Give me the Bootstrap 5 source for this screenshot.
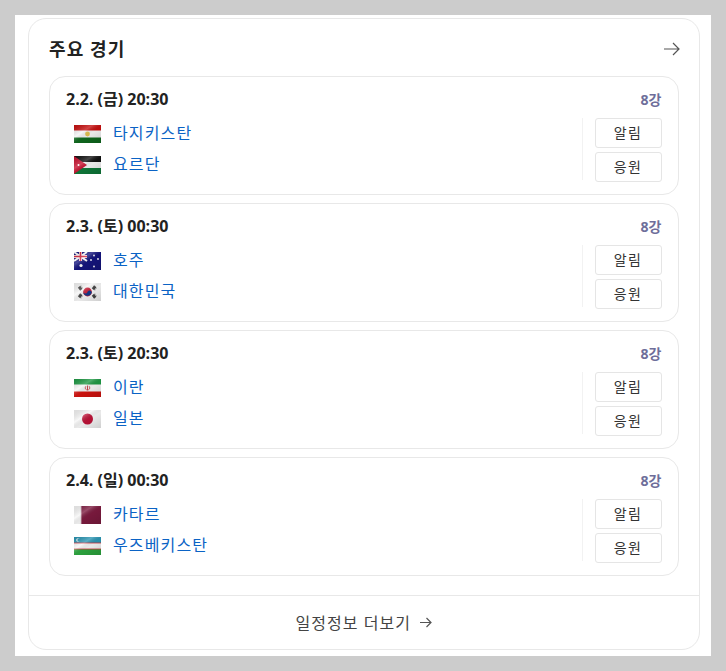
<!DOCTYPE html>
<html lang="ko">
<head>
<meta charset="utf-8">
<title>주요 경기</title>
<link href="https://cdn.jsdelivr.net/npm/bootstrap@5.3.0/dist/css/bootstrap.min.css" rel="stylesheet">
<style>
html,body{height:100%}
body{background:#ccc;font-family:"Open Sans","Noto Sans CJK KR","Noto Sans",sans-serif;color:#222;overflow:hidden}
.sheet{margin:15px 15px 0 15px;width:696px;height:641px;background:#fff;padding:3px 11.5px 6px 13px}
.panel{height:632px;border:1px solid #e8e8e8;border-radius:18px;background:#fff}
.panel-head{height:57px;padding:2px 19px 0 20px}
.panel-title{font-size:18px;font-weight:700;color:#222;letter-spacing:1.1px;line-height:26px;margin:0}
.match-list{padding:0 20px;gap:8px}
.match{height:119px;border:1px solid #e8e8e8;border-radius:16px;padding:11px 16px 12px 16px}
.match-top{height:22px}
.match-time{font-size:16px;font-weight:700;line-height:22px;color:#222;letter-spacing:0}
.match-round{font-size:14px;font-weight:700;color:#6e6e9a;line-height:22px;padding-top:1px}
.teams{padding-left:8px;margin-top:9px;width:516px}
.team{height:31px;gap:12px}
.team a{font-size:16px;color:#0b63c5;text-decoration:none;letter-spacing:1.15px;line-height:20px;margin-top:-3px}
.flag{display:block;width:27px;height:18px;flex:none;margin-top:-1px}
.actions{position:relative;padding-left:13px;gap:4px;margin-top:8px}
.actions::before{content:"";position:absolute;left:0;top:0;height:62px;width:1px;background:#f2f2f2}
.act{width:67px;height:30px;padding:0;border:1px solid #e5e5e5;border-radius:3px;background:#fff;font-size:14px;color:#333;line-height:26px;letter-spacing:1.4px;--bs-btn-hover-bg:#fff}
.panel-foot{margin-top:19px;border-top:1px solid #e8e8e8;height:54px;font-size:16px;color:#444;gap:9px;letter-spacing:1.05px}
.panel-foot a{color:#444;text-decoration:none}
</style>
</head>
<body>
<svg width="0" height="0" class="position-absolute">
<defs>
<linearGradient id="gl" x1="0" y1="0" x2="1" y2="1">
<stop offset="0" stop-color="#000" stop-opacity=".1"/>
<stop offset=".35" stop-color="#fff" stop-opacity=".22"/>
<stop offset=".55" stop-color="#000" stop-opacity=".05"/>
<stop offset="1" stop-color="#000" stop-opacity=".16"/>
</linearGradient>
</defs>
</svg>
<div class="sheet">
<section class="panel d-flex flex-column">
<div class="panel-head d-flex align-items-center justify-content-between">
<h2 class="panel-title">주요 경기</h2>
<svg width="16" height="14" viewBox="0 0 16 14" fill="none" stroke="#555" stroke-width="1.2"><path d="M0 7H15M9 1l6 6-6 6"/></svg>
</div>
<div class="match-list d-flex flex-column">

<article class="match">
<div class="match-top d-flex justify-content-between"><span class="match-time">2.2. (금) 20:30</span><span class="match-round">8강</span></div>
<div class="d-flex justify-content-between">
<div class="teams">
<div class="team d-flex align-items-center"><svg class="flag" viewBox="0 0 27 18"><rect width="27" height="18" fill="#f4f4f4"/><rect width="27" height="5.500" fill="#c70f0f"/><rect y="12.500" width="27" height="5.500" fill="#0f6a1e"/><circle cx="13.500" cy="9" r="2.400" fill="#e3c24e"/><rect width="27" height="18" fill="url(#gl)"/></svg><a href="#">타지키스탄</a></div>
<div class="team d-flex align-items-center"><svg class="flag" viewBox="0 0 27 18"><rect width="27" height="18" fill="#f4f4f4"/><rect width="27" height="6" fill="#111"/><rect y="12" width="27" height="6" fill="#0f7a3a"/><path d="M0 0L13 9 0 18Z" fill="#c8102e"/><circle cx="4.500" cy="9" r="1" fill="#fff"/><rect width="27" height="18" fill="url(#gl)"/></svg><a href="#">요르단</a></div>
</div>
<div class="actions d-flex flex-column"><button class="btn act" type="button">알림</button><button class="btn act" type="button">응원</button></div>
</div>
</article>

<article class="match">
<div class="match-top d-flex justify-content-between"><span class="match-time">2.3. (토) 00:30</span><span class="match-round">8강</span></div>
<div class="d-flex justify-content-between">
<div class="teams">
<div class="team d-flex align-items-center"><svg class="flag" viewBox="0 0 27 18"><rect width="27" height="18" fill="#14147e"/><path d="M0 0L13 9M13 0L0 9" stroke="#fff" stroke-width="2"/><path d="M6.500 0V9M0 4.500H13" stroke="#fff" stroke-width="3"/><path d="M6.500 0V9M0 4.500H13" stroke="#d3203a" stroke-width="1.600"/><g fill="#fff"><circle cx="7" cy="13.500" r="1.600"/><circle cx="20" cy="3.500" r=".9"/><circle cx="24" cy="7" r=".9"/><circle cx="17" cy="8" r=".9"/><circle cx="20" cy="14.500" r=".9"/></g><rect width="27" height="18" fill="url(#gl)"/></svg><a href="#">호주</a></div>
<div class="team d-flex align-items-center"><svg class="flag" viewBox="0 0 27 18"><rect width="27" height="18" fill="#f6f6f6"/><circle cx="13.500" cy="9" r="4.400" fill="#c8203a"/><path d="M9.200 8.400a4.400 4.400 0 0 0 8.600 1.200a2.200 2.200 0 0 0-4.300-.6a2.200 2.200 0 0 1-4.300-.6Z" fill="#123a8c"/><g stroke="#444" stroke-width="1.900" stroke-dasharray="3 .7"><path d="M4.500 5.500L7.500 3M5.600 7L8.600 4.500"/><path d="M19.500 3L22.500 5.500M18.400 4.500L21.400 7"/><path d="M4.500 12.500L7.500 15M5.600 11L8.600 13.500"/><path d="M19.500 15L22.500 12.500M18.400 13.500L21.400 11"/></g><rect width="27" height="18" fill="url(#gl)"/></svg><a href="#">대한민국</a></div>
</div>
<div class="actions d-flex flex-column"><button class="btn act" type="button">알림</button><button class="btn act" type="button">응원</button></div>
</div>
</article>

<article class="match">
<div class="match-top d-flex justify-content-between"><span class="match-time">2.3. (토) 20:30</span><span class="match-round">8강</span></div>
<div class="d-flex justify-content-between">
<div class="teams">
<div class="team d-flex align-items-center"><svg class="flag" viewBox="0 0 27 18"><rect width="27" height="18" fill="#f6f6f6"/><rect width="27" height="5.500" fill="#1f9a45"/><rect y="12.500" width="27" height="5.500" fill="#d5130f"/><path d="M13.500 6.500v5M11.800 7.300c-1 1.600-.4 3 .8 3.600M15.200 7.300c1 1.600.4 3-.8 3.600" fill="none" stroke="#c7303a" stroke-width=".9"/><rect width="27" height="18" fill="url(#gl)"/></svg><a href="#">이란</a></div>
<div class="team d-flex align-items-center"><svg class="flag" viewBox="0 0 27 18"><rect width="27" height="18" fill="#f6f6f6"/><circle cx="13.500" cy="9" r="5.500" fill="#bd1237"/><rect width="27" height="18" fill="url(#gl)"/></svg><a href="#">일본</a></div>
</div>
<div class="actions d-flex flex-column"><button class="btn act" type="button">알림</button><button class="btn act" type="button">응원</button></div>
</div>
</article>

<article class="match">
<div class="match-top d-flex justify-content-between"><span class="match-time">2.4. (일) 00:30</span><span class="match-round">8강</span></div>
<div class="d-flex justify-content-between">
<div class="teams">
<div class="team d-flex align-items-center"><svg class="flag" viewBox="0 0 27 18"><rect width="27" height="18" fill="#f6f6f6"/><path d="M27 0H8l-1.500 1L8 2l-1.500 1L8 4 6.500 5 8 6 6.500 7 8 8 6.500 9 8 10l-1.500 1L8 12l-1.500 1L8 14l-1.500 1L8 16l-1.500 1L8 18H27Z" fill="#7d1a3f"/><rect width="27" height="18" fill="url(#gl)"/></svg><a href="#">카타르</a></div>
<div class="team d-flex align-items-center"><svg class="flag" viewBox="0 0 27 18"><rect width="27" height="18" fill="#f6f6f6"/><rect width="27" height="6" fill="#2a96b4"/><rect y="12" width="27" height="6" fill="#2da83f"/><rect y="5.600" width="27" height=".8" fill="#d8303a"/><rect y="11.600" width="27" height=".8" fill="#d8303a"/><circle cx="4" cy="3" r="1.800" fill="#fff"/><circle cx="4.800" cy="3" r="1.500" fill="#2a96b4"/><rect width="27" height="18" fill="url(#gl)"/></svg><a href="#">우즈베키스탄</a></div>
</div>
<div class="actions d-flex flex-column"><button class="btn act" type="button">알림</button><button class="btn act" type="button">응원</button></div>
</div>
</article>

</div>
<div class="panel-foot d-flex align-items-center justify-content-center">
<a href="#">일정정보 더보기</a>
<svg width="12" height="11" viewBox="0 0 12 11" fill="none" stroke="#555" stroke-width="1.200"><path d="M0 5.500H11M6.500 1l4.500 4.500-4.500 4.500"/></svg>
</div>
</section>
</div>
<script src="https://cdn.jsdelivr.net/npm/bootstrap@5.3.0/dist/js/bootstrap.bundle.min.js"></script>
</body>
</html>
